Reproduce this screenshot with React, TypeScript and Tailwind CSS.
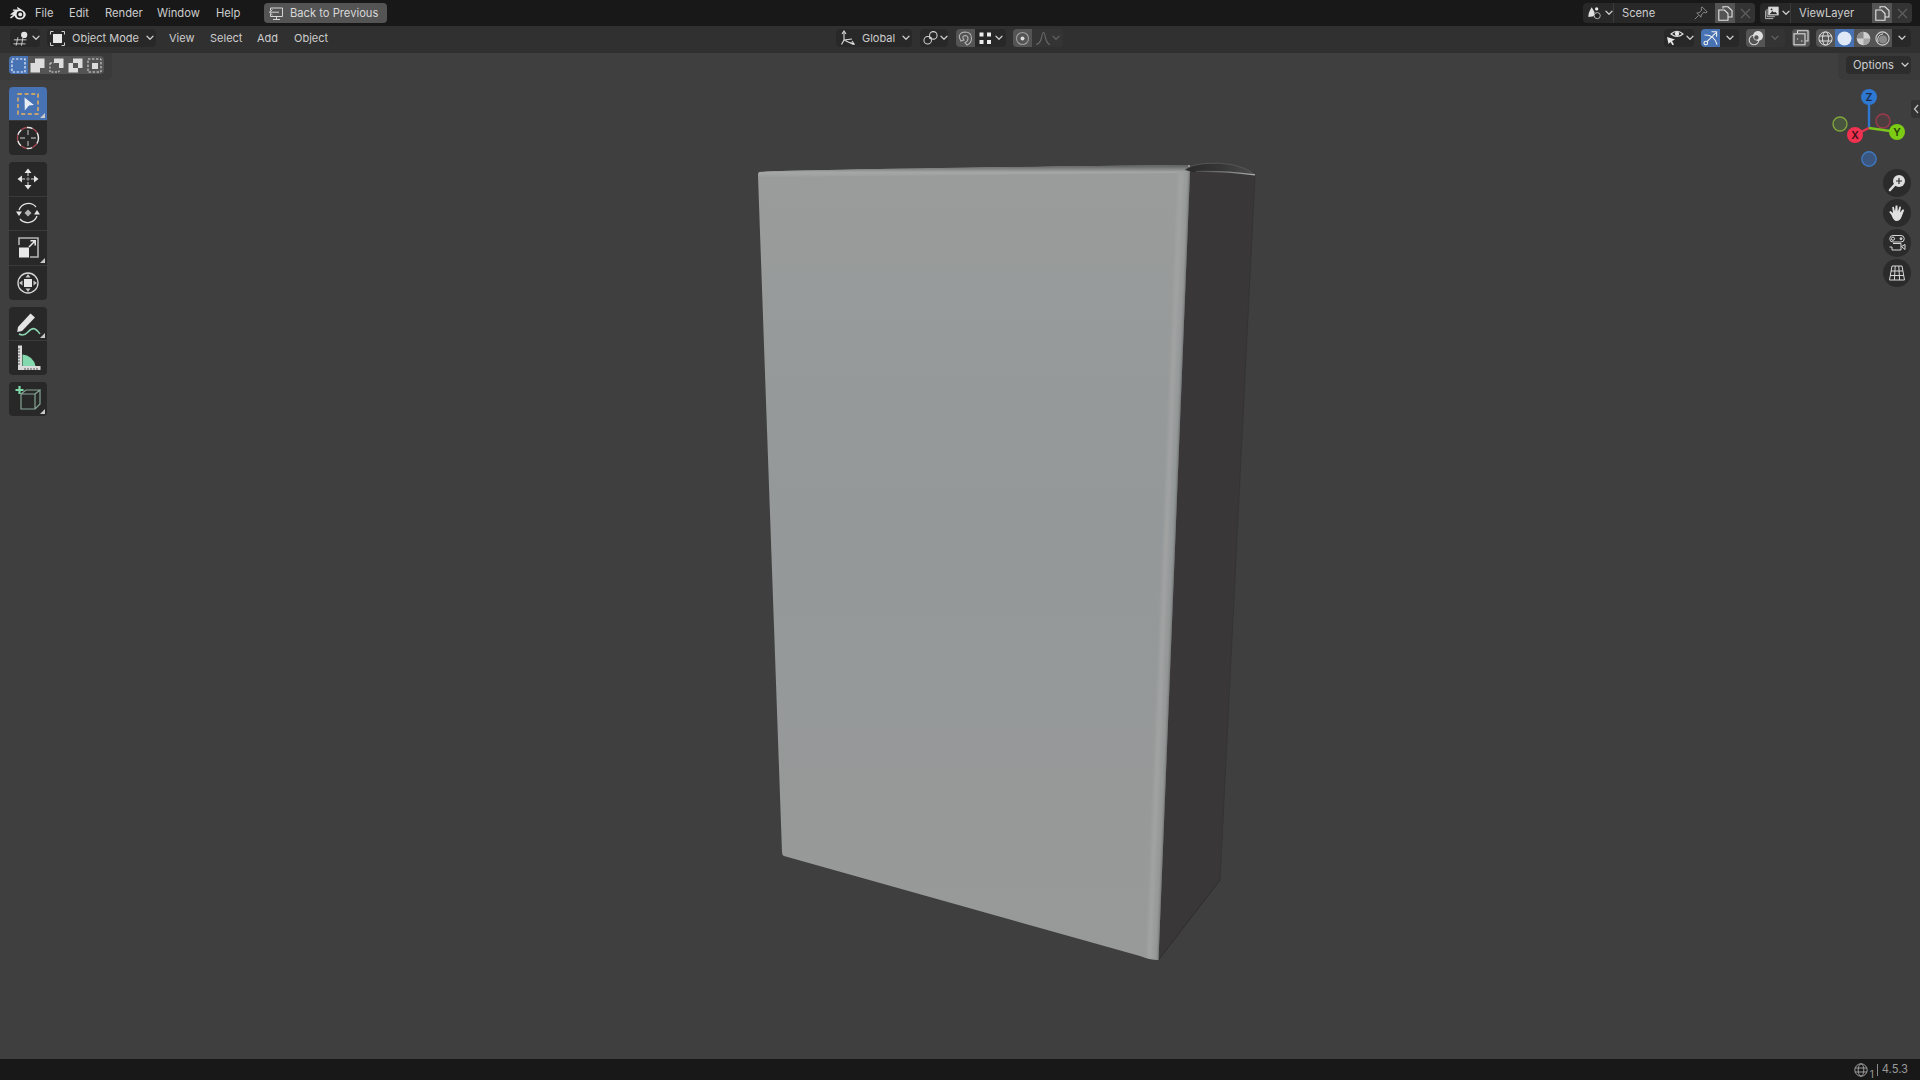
import React from "react";

const Chev = ({ c = "#c8c8c8" }: { c?: string }) => (
  <svg width="8" height="6" viewBox="0 0 8 6" className="shrink-0">
    <path d="M1 1.2 L4 4.2 L7 1.2" fill="none" stroke={c} strokeWidth="1.3" strokeLinecap="round" strokeLinejoin="round" />
  </svg>
);

const BlenderLogo = () => (
  <svg width="19" height="16" viewBox="0 0 19 16">
    <path d="M1 9.4 L5.8 5.8 L4 5.8 Q3.4 5 4.2 4.6 L9.6 4.6 L8 3.2 Q7.6 2.2 8.8 2.2 L13.2 5 Q17.6 7.4 16.6 10.8 Q15 14.4 10.8 14.4 Q6.4 14.4 5.6 10.8 L2.4 13.2 Q1 13.6 1.2 12.2 L4.4 9.8 L2 9.8 Z" fill="#e8e8e8" />
    <circle cx="11" cy="9.4" r="3.4" fill="#181818" />
    <circle cx="11.2" cy="9.4" r="1.9" fill="#e8e8e8" />
  </svg>
);

const Screen = () => (
  <svg width="16" height="16" viewBox="0 0 16 16" fill="none" stroke="#d4d4d4" strokeWidth="1">
    <path d="M2.5 3 H14.5 V11.5 H2.5 V9 M2.5 5.5 V3" />
    <path d="M8.5 11.5 V14.5 M5 14.5 H12" />
    <path d="M11 7.2 H1.5 M4.5 4.5 L1.5 7.2 L4.5 10" />
  </svg>
);

const EditorType = () => (
  <svg width="19" height="17" viewBox="0 0 19 17" fill="none" stroke="#d4d4d4" strokeWidth="1">
    <path d="M1 10 H15 M0.5 14.5 H14 M5.5 7 L3.5 16.5 M11 8 L9.5 16.5" />
    <circle cx="12.5" cy="4.5" r="3.5" fill="#e4e4e4" stroke="none" />
  </svg>
);

const ObjectIcon = () => (
  <svg width="15" height="15" viewBox="0 0 15 15" fill="none" stroke="#cfcfcf" strokeWidth="1">
    <path d="M0.5 3.5 V0.5 H3.5 M11.5 0.5 H14.5 V3.5 M14.5 11.5 V14.5 H11.5 M3.5 14.5 H0.5 V11.5" />
    <rect x="3" y="3" width="9" height="9" fill="#e8e8e8" stroke="none" />
  </svg>
);

const GlobalIcon = () => (
  <svg width="16" height="16" viewBox="0 0 16 16" fill="none" stroke="#dadada" strokeWidth="1.1">
    <path d="M4 2 V10 L1.5 14.5 M4 10 L13.5 14.5 M4 10 L12 9" />
    <path d="M2 4 L4 1 L6 4 M10.5 12.5 L14.5 14.5 L12 11" />
  </svg>
);

const LinkIcon = () => (
  <svg width="16" height="16" viewBox="0 0 16 16" fill="none" stroke="#d4d4d4" strokeWidth="1.1">
    <circle cx="5" cy="10.5" r="4" />
    <circle cx="11" cy="5.2" r="4" />
    <circle cx="8" cy="8" r="0.8" fill="#d4d4d4" />
  </svg>
);

const Magnet = () => (
  <svg width="15" height="15" viewBox="0 0 15 15" fill="none" stroke="#b4b4b4" strokeWidth="1.1">
    <path d="M3 10 L1.5 7 Q0.5 1.5 7 1 Q13.5 1 13.5 7.5 Q13.5 12 9 14 L7 11.5 Q10 10.5 10 7.5 Q10 4.5 7 4.5 Q4.5 4.8 5 7.5 L6 9 Z" />
  </svg>
);

const Dots = () => (
  <svg width="13" height="13" viewBox="0 0 13 13" fill="#ececec">
    <rect x="0.5" y="0.5" width="4" height="4" />
    <rect x="8" y="0.5" width="4" height="4" />
    <rect x="0.5" y="8" width="4" height="4" />
    <rect x="8" y="8" width="4" height="4" />
  </svg>
);

const PropCircle = () => (
  <svg width="15" height="15" viewBox="0 0 15 15" fill="none">
    <circle cx="7.5" cy="7.5" r="6" stroke="#9c9c9c" strokeWidth="1.1" />
    <circle cx="7.5" cy="7.5" r="2" fill="#dcdcdc" />
  </svg>
);

const Falloff = () => (
  <svg width="16" height="15" viewBox="0 0 16 15" fill="none">
    <path d="M1 13.5 Q5 13 6.5 7 Q7.5 1.5 8.5 1.5 Q9.5 1.5 10.5 7 Q12 13 15 13.5" stroke="#686868" strokeWidth="1.1" />
  </svg>
);

const SceneIcon = () => (
  <svg width="17" height="16" viewBox="0 0 17 16">
    <path d="M4.5 1 L8 7 L7 12 L0.5 13 Q0 8 4.5 1 Z" fill="#e0e0e0" />
    <circle cx="10.5" cy="3" r="2" fill="#e8e8e8" />
    <circle cx="11.2" cy="11.2" r="3.7" fill="#202020" stroke="#cfcfcf" strokeWidth="1" />
  </svg>
);

const PinIcon = () => (
  <svg width="14" height="14" viewBox="0 0 14 14" fill="none" stroke="#8a8a8a" strokeWidth="1">
    <path d="M8 0.8 L13.2 6 L11.8 6.8 L9.8 6.2 L7.2 9 L7 11.2 L2.8 7 L5 6.8 L7.8 4.2 L7.2 2.2 Z M4.4 9.6 L0.8 13.2" />
  </svg>
);

const Copy = () => (
  <svg width="15" height="15" viewBox="0 0 15 15" fill="none" stroke="#e4e4e4" strokeWidth="1.1">
    <path d="M5 2.5 V0.8 H10 L14 4.5 V11 H10.5 M5 4 H0.8 V14.2 H10 V7.5 L6.5 4 Z" />
  </svg>
);

const XIcon = () => (
  <svg width="11" height="11" viewBox="0 0 11 11" stroke="#5f5f5f" strokeWidth="1.2">
    <path d="M1 1 L10 10 M10 1 L1 10" />
  </svg>
);

const LayerIcon = () => (
  <svg width="17" height="16" viewBox="0 0 17 16" fill="none" stroke="#d4d4d4" strokeWidth="1">
    <path d="M2.5 3 V12.5 H12 M0.5 5 V14.8 H10" />
    <rect x="4.5" y="0.8" width="11.5" height="9.6" fill="#dcdcdc" stroke="#dcdcdc" />
    <path d="M5.5 9.5 L9 5.5 L11 7.5 L12.5 6.5 L15 9.5 Z" fill="#2a2a2a" stroke="none" />
    <circle cx="8" cy="3.6" r="1.1" fill="#2a2a2a" stroke="none" />
  </svg>
);

const VisIcon = () => (
  <svg width="18" height="16" viewBox="0 0 18 16" fill="none">
    <path d="M5 4 Q11 -1.5 17 4 Q11 9 5 4 Z" stroke="#e0e0e0" strokeWidth="1.1" />
    <circle cx="11" cy="3.8" r="2.2" fill="#e8e8e8" />
    <path d="M1 7 L9 9.5 L6 11 L8 14.5 L6.5 15.3 L4.5 12 L2.5 14 Z" fill="#e8e8e8" />
  </svg>
);

const GizmoToggle = () => (
  <svg width="16" height="16" viewBox="0 0 16 16" fill="none" stroke="#f0f0f0" strokeWidth="1.1">
    <circle cx="2.8" cy="13" r="1.8" />
    <path d="M4 11.6 L12.8 2.8 M8.5 1.8 H13.6 V6.8" />
    <path d="M1.5 5 Q11 4.5 14 14.5" />
  </svg>
);

const OverlayIcon = () => (
  <svg width="16" height="16" viewBox="0 0 16 16" fill="none">
    <circle cx="6" cy="10" r="4.8" stroke="#d4d4d4" strokeWidth="1.1" />
    <circle cx="10" cy="6" r="5" fill="#dedede" />
    <circle cx="8.4" cy="7.5" r="2.2" fill="#545454" />
  </svg>
);

const XrayIcon = () => (
  <svg width="16" height="16" viewBox="0 0 16 16" fill="none" stroke="#dcdcdc" strokeWidth="1.1">
    <path d="M4.5 3 V0.8 H15 V11 H12.5" />
    <rect x="1" y="3.8" width="11" height="11" />
    <path d="M4.5 8.5 V9.5 M8 11 H9.5" />
  </svg>
);

const Wire = () => (
  <svg width="15" height="15" viewBox="0 0 15 15" fill="none" stroke="#dcdcdc" strokeWidth="1">
    <circle cx="7.5" cy="7.5" r="6.6" />
    <ellipse cx="7.5" cy="7.5" rx="3" ry="6.6" />
    <path d="M1 5 H14 M1 10 H14" />
  </svg>
);
const Solid = () => (
  <svg width="15" height="15" viewBox="0 0 15 15">
    <circle cx="7.5" cy="7.5" r="7" fill="#dfe8f6" />
  </svg>
);
const Mat = () => (
  <svg width="15" height="15" viewBox="0 0 15 15">
    <circle cx="7.5" cy="7.5" r="6.8" fill="#cfcfcf" />
    <path d="M7.5 7.5 V0.7 A6.8 6.8 0 0 0 0.7 7.5 Z" fill="#8a8a8a" />
    <path d="M7.5 7.5 H14.3 A6.8 6.8 0 0 1 7.5 14.3 Z" fill="#a4a4a4" />
  </svg>
);
const Rendered = () => (
  <svg width="15" height="15" viewBox="0 0 15 15" fill="none">
    <circle cx="7.5" cy="7.5" r="6.6" stroke="#cfcfcf" strokeWidth="1.1" />
    <path d="M3 11 Q1.5 4 8 2.8" stroke="#d8d8d8" strokeWidth="1" />
    <circle cx="8" cy="8.4" r="4" fill="#8a8a8a" />
  </svg>
);

const Corner = () => (
  <svg width="5" height="5" viewBox="0 0 5 5" className="absolute right-[2px] bottom-[2px]">
    <path d="M5 0 V5 H0 Z" fill="#c8c8c8" />
  </svg>
);

const Svg26 = ({ children }: { children: React.ReactNode }) => (
  <svg width="26" height="26" viewBox="0 0 26 26" fill="none">{children}</svg>
);

const SelectIcon = () => (
  <Svg26>
    <rect x="3" y="3" width="20" height="20" stroke="#f1b35a" strokeWidth="1.4" strokeDasharray="4 2.6" />
    <path d="M9.5 6.5 L19 14 L14 14.6 L9.8 19.5 Z" fill="#e6ecf4" />
  </Svg26>
);
const CursorIcon = () => (
  <Svg26>
    <circle cx="13" cy="13" r="10.5" stroke="#e8e8e8" strokeWidth="1.4" strokeDasharray="6 6" />
    <circle cx="13" cy="13" r="10.5" stroke="#a34a55" strokeWidth="1.4" strokeDasharray="6 6" strokeDashoffset="6" />
    <path d="M13 5 V10 M13 16 V21 M5 13 H10 M16 13 H21" stroke="#9a9a9a" strokeWidth="1.4" />
  </Svg26>
);
const MoveIcon = () => (
  <Svg26>
    <path d="M13 2.5 L16.5 7 H9.5 Z M13 23.5 L9.5 19 H16.5 Z M2.5 13 L7 9.5 V16.5 Z M23.5 13 L19 16.5 V9.5 Z" fill="#e6e6e6" />
    <path d="M13 7 V10 M13 16 V19 M7 13 H10 M16 13 H19" stroke="#9a9a9a" strokeWidth="1.6" />
    <path d="M13 11 L15 13 L13 15 L11 13 Z" fill="#7d7d7d" />
  </Svg26>
);
const RotateIcon = () => (
  <Svg26>
    <path d="M4 10 A10 10 0 0 1 21 7 M22 16 A10 10 0 0 1 5 19" stroke="#e2e2e2" strokeWidth="1.3" />
    <path d="M1 11.5 H7 L4 16 Z M25 14.5 H19 L22 10 Z" fill="#e6e6e6" />
    <path d="M13 9.5 L16.5 13 L13 16.5 L9.5 13 Z" fill="#b4b4b4" />
  </Svg26>
);
const ScaleIcon = () => (
  <Svg26>
    <path d="M4 10 V3 H23 V22 H15" stroke="#b4b4b4" strokeWidth="1.6" />
    <rect x="4" y="12.5" width="10" height="10" fill="#e8e8e8" />
    <path d="M14 12 L20 6 M15.5 5.8 H20.2 V10.5" stroke="#e8e8e8" strokeWidth="1.5" />
  </Svg26>
);
const TransformIcon = () => (
  <Svg26>
    <circle cx="13" cy="13" r="10" stroke="#d8d8d8" strokeWidth="1.3" />
    <rect x="9" y="9" width="8" height="8" fill="#e8e8e8" />
    <path d="M13 4 L15.5 7.5 H10.5 Z M13 22 L10.5 18.5 H15.5 Z M4 13 L7.5 10.5 V15.5 Z M22 13 L18.5 15.5 V10.5 Z" fill="#c4c4c4" />
  </Svg26>
);
const AnnotateIcon = () => (
  <Svg26>
    <path d="M3 16 L15.5 2.5 L20 6.5 L7 20 L2.2 21 Z" fill="#e4e4e4" />
    <path d="M4 23 Q9 25.5 13 21 Q17 16.5 20 18 Q23 19.5 25 23" stroke="#8fd8b4" strokeWidth="1.5" />
  </Svg26>
);
const MeasureIcon = () => (
  <Svg26>
    <path d="M7.5 9.5 A 14 14 0 0 1 20.5 21 H7.5 Z" fill="#83d9ad" />
    <path d="M3 0.5 H7 V21 H25.5 V25 H3 Z" fill="#dadada" />
    <path d="M3 4 H5 M3 7 H5 M3 10 H5 M3 13 H5 M3 16 H5 M3 19 H5 M10 25 V23 M13 25 V23 M16 25 V23 M19 25 V23 M22 25 V23" stroke="#555" strokeWidth="1" />
  </Svg26>
);
const AddIcon = () => (
  <Svg26>
    <path d="M6 8 H20 V23 H6 Z M6 8 L11 4 H25 L20 8 M25 4 V18 L20 23" stroke="#86a695" strokeWidth="1.2" />
    <path d="M4.5 0 V8 M0.5 4 H8.5" stroke="#7ed8a8" strokeWidth="2.2" />
  </Svg26>
);

const Magnify = () => (
  <svg width="18" height="18" viewBox="0 0 18 18">
    <circle cx="11" cy="7" r="6" fill="#dedede" />
    <path d="M11 4 V10 M8 7 H14" stroke="#2c2c2c" strokeWidth="1.2" />
    <path d="M6.5 11 L2 16" stroke="#dedede" strokeWidth="2.6" strokeLinecap="round" />
  </svg>
);
const Hand = () => (
  <svg width="18" height="18" viewBox="0 0 18 18">
    <path d="M3.5 11 L1.2 8 L2.4 7 L5 9 L4.2 3 L5.8 2.8 L7 7.5 L7.6 1.6 H9.4 L9.8 7.5 L11.5 2.4 L13 2.8 L12 8.5 L14.8 5.2 L16.2 6 L13.5 13 Q12 17 8.5 17 Q5.5 17 3.5 11 Z" fill="#e0e0e0" />
  </svg>
);
const Camera = () => (
  <svg width="18" height="18" viewBox="0 0 18 18" fill="none" stroke="#d8d8d8" strokeWidth="1">
    <path d="M5 1.5 H13 A3.2 3.2 0 0 1 13 8 H5 A3.2 3.2 0 0 1 5 1.5 Z" />
    <circle cx="5" cy="4.7" r="1.6" />
    <circle cx="13" cy="4.7" r="1" fill="#d8d8d8" />
    <path d="M5 9.5 H13 V16 H4 V13 H1.5 M13.5 12.5 L17 10.5 V15.5 Z" />
  </svg>
);
const GridIcon = () => (
  <svg width="18" height="18" viewBox="0 0 18 18" fill="none" stroke="#d8d8d8" strokeWidth="1">
    <path d="M4 2 H14 L16.5 16 H1.5 Z M7.2 2 L6.4 16 M10.8 2 L11.6 16 M3 7 H15 M2.2 11.5 H15.8" />
  </svg>
);

const Globe = () => (
  <svg width="14" height="14" viewBox="0 0 14 14" fill="none" stroke="#a8a8a8" strokeWidth="0.9">
    <circle cx="7" cy="7" r="6.2" />
    <ellipse cx="7" cy="7" rx="2.8" ry="6.2" />
    <path d="M1 5 H13 M1 9 H13" />
  </svg>
);

const MenuItem = ({ children, w }: { children: React.ReactNode; w: string }) => (
  <span className={w}>{children}</span>
);

const ToolBtn = ({ children, active, corner, top, bottom, tall }: { children: React.ReactNode; active?: boolean; corner?: boolean; top?: boolean; bottom?: boolean; tall?: boolean }) => (
  <div
    className={
      "relative flex w-[38px] items-center justify-center " +
      (tall ? "h-[34.5px] " : "h-[34px] ") +
      (active ? "bg-[#4772b3] " : "bg-[#282828] ") +
      (top ? "rounded-t-[4px] " : "") +
      (bottom ? "rounded-b-[4px] " : "border-b border-[#3a3a3a] ")
    }
  >
    {children}
    {corner && <Corner />}
  </div>
);

const NavBtn = ({ children }: { children: React.ReactNode }) => (
  <div className="flex h-[28px] w-[28px] items-center justify-center rounded-full bg-[#2b2b2b]">{children}</div>
);

const Box = () => (
  <svg className="absolute left-0 top-0" width="1920" height="1006" viewBox="0 53 1920 1006">
    <defs>
      <linearGradient id="front" x1="0" y1="0" x2="0" y2="1">
        <stop offset="0" stopColor="#999c9b" />
        <stop offset="0.45" stopColor="#949898" />
        <stop offset="1" stopColor="#989a99" />
      </linearGradient>
      <linearGradient id="topStrip" x1="0" y1="0" x2="0" y2="1">
        <stop offset="0" stopColor="#5a5c5c" />
        <stop offset="0.6" stopColor="#a5a7a7" />
        <stop offset="1" stopColor="#9d9f9f" />
      </linearGradient>
      <linearGradient id="capFill" x1="0" y1="0" x2="1" y2="0">
        <stop offset="0" stopColor="#2b2a2a" />
        <stop offset="0.5" stopColor="#373636" />
        <stop offset="1" stopColor="#4c4c4c" />
      </linearGradient>
      <linearGradient id="capLine" x1="0" y1="0" x2="1" y2="0">
        <stop offset="0" stopColor="#4a4a4a" />
        <stop offset="1" stopColor="#aeb0b0" />
      </linearGradient>
      <filter id="soft" x="-50%" y="-5%" width="200%" height="110%">
        <feGaussianBlur stdDeviation="1.8" />
      </filter>
      <clipPath id="frontClip">
        <path d="M760 172 Q800 169.5 1190 165 L1190 172 L1158.5 960 Q1150 960 1140 956 L784 856 Q782 855 782 852 L758 176 Q758 172 760 172 Z" />
      </clipPath>
    </defs>
    <path d="M1255 175 L1220 880 L1158.5 960 L1187 170 L1255 172 Z" fill="#393737" />
    <path d="M1158.5 960 L1220 880" stroke="#2e2d2d" strokeWidth="1" />
    <path d="M1220 880 L1255 175" stroke="#353434" strokeWidth="1" />
    <path d="M760 172 Q800 169.5 1190 165 L1190 172 L1158.5 960 Q1150 960 1140 956 L784 856 Q782 855 782 852 L758 176 Q758 172 760 172 Z" fill="url(#front)" />
    <g clipPath="url(#frontClip)">
      <path d="M1181 172 L1149.5 960" stroke="#a1a3a3" strokeWidth="5" filter="url(#soft)" />
      <path d="M1191 170 L1159.5 960" stroke="#5c5d5d" strokeWidth="2.6" filter="url(#soft)" />
    </g>
    <path d="M760 172 Q800 169.5 1188 165 L1188 171 L1176 173 L762 177 L758 176 Q758 172 760 172 Z" fill="url(#topStrip)" />
    <path d="M1185 170 Q1190 165 1205 163.5 Q1238 161 1255 174.5 Q1225 171 1193 172 Z" fill="url(#capFill)" />
    <path d="M1185 170 Q1190 165 1205 163.5 Q1238 161 1255 174.5" stroke="#5a5a5a" strokeWidth="0.8" fill="none" />
    <path d="M1196 171.5 Q1225 171 1255 174.8" stroke="url(#capLine)" strokeWidth="1.2" fill="none" />
  </svg>
);

const Gizmo = () => (
  <svg width="80" height="82" viewBox="0 0 80 82" className="block">
    <circle cx="37" cy="73" r="7.2" fill="#3b567f" stroke="#3f78c0" strokeWidth="1.4" />
    <circle cx="8" cy="38" r="7" fill="#4a5540" stroke="#7fa53a" strokeWidth="1.4" />
    <circle cx="51" cy="35" r="7" fill="#4f3e40" stroke="#9d3a4c" strokeWidth="1.4" />
    <path d="M37 42 V14" stroke="#2e78d2" strokeWidth="2.4" />
    <path d="M37 42 L23 49" stroke="#e0344f" strokeWidth="2.4" />
    <path d="M37 42 L65 46" stroke="#7bc51e" strokeWidth="2.4" />
    <circle cx="37" cy="11" r="8" fill="#2e78d2" />
    <circle cx="23" cy="49" r="8" fill="#f0314f" />
    <circle cx="65" cy="46" r="8" fill="#7ccb14" />
    <text x="37" y="15" textAnchor="middle" className="fill-[#1b2b44] font-['Inter'] text-[10.5px] font-semibold">Z</text>
    <text x="23" y="53" textAnchor="middle" className="fill-[#3d0e16] font-['Inter'] text-[10.5px] font-semibold">X</text>
    <text x="65" y="50" textAnchor="middle" className="fill-[#26400a] font-['Inter'] text-[10.5px] font-semibold">Y</text>
  </svg>
);

export default function App() {
  return (
    <div className="flex h-screen w-full flex-col overflow-hidden bg-[#3f3f3f] font-['Inter',sans-serif] text-[11.2px] text-[#cdcdcd]">
      <div className="flex h-[26px] shrink-0 items-center bg-[#181818] pr-[8px]">
        <div className="ml-[9px] flex w-[26px] shrink-0 items-center"><BlenderLogo /></div>
        <MenuItem w="w-[34px] pt-[1px]">File</MenuItem>
        <MenuItem w="w-[36px] pt-[1px]">Edit</MenuItem>
        <MenuItem w="w-[52px] pt-[1px]">Render</MenuItem>
        <MenuItem w="w-[59px] pt-[1px]">Window</MenuItem>
        <MenuItem w="w-[48px] pt-[1px]">Help</MenuItem>
        <div className="flex h-[20px] w-[123px] items-center gap-[6px] rounded-[4px] bg-[#545454] pl-[4px] text-[#d8d8d8]">
          <Screen />
          <span className="pt-[1px]">Back to Previous</span>
        </div>
        <div className="ml-auto flex h-[20px] w-[172px] items-center overflow-hidden rounded-[4px] bg-[#282828]">
          <div className="flex h-full w-[31px] items-center gap-[3px] border-r border-[#3a3a3a] pl-[5px]"><SceneIcon /><Chev /></div>
          <div className="flex h-full w-[101px] items-center justify-between pl-[8px] pr-[7px]"><span className="pt-[1px]">Scene</span><PinIcon /></div>
          <div className="flex h-full w-[20px] items-center justify-center bg-[#545454]"><Copy /></div>
          <div className="flex h-full w-[20px] items-center justify-center bg-[#333333]"><XIcon /></div>
        </div>
        <div className="ml-[5px] flex h-[20px] w-[152px] items-center overflow-hidden rounded-[4px] bg-[#282828]">
          <div className="flex h-full w-[31px] items-center gap-[3px] border-r border-[#3a3a3a] pl-[5px]"><LayerIcon /><Chev /></div>
          <div className="flex h-full w-[81px] items-center pl-[8px]"><span className="pt-[1px]">ViewLayer</span></div>
          <div className="flex h-full w-[20px] items-center justify-center bg-[#545454]"><Copy /></div>
          <div className="flex h-full w-[20px] items-center justify-center bg-[#333333]"><XIcon /></div>
        </div>
      </div>

      <div className="flex h-[27px] shrink-0 items-center bg-[#303030] pb-[3px] pl-[10px] pr-[9px] text-[11px]">
        <div className="flex h-[18px] w-[30px] items-center gap-[2px] rounded-[4px] bg-[#282828] pl-[3px]"><EditorType /><Chev /></div>
        <div className="ml-[7px] flex h-[18px] w-[109px] items-center rounded-[4px] bg-[#282828] pl-[3px] pr-[2px]">
          <ObjectIcon />
          <span className="ml-[7px]">Object Mode</span>
          <span className="ml-auto"><Chev /></span>
        </div>
        <MenuItem w="ml-[13px] w-[41px]">View</MenuItem>
        <MenuItem w="w-[47px]">Select</MenuItem>
        <MenuItem w="w-[37px]">Add</MenuItem>
        <MenuItem w="w-[60px]">Object</MenuItem>

        <div className="ml-[482px] flex h-[18px] w-[76px] items-center rounded-[4px] bg-[#282828] pl-[4px] pr-[2px]">
          <GlobalIcon />
          <span className="ml-[6px]">Global</span>
          <span className="ml-auto"><Chev /></span>
        </div>
        <div className="ml-[8px] flex h-[18px] w-[28px] items-center gap-[2px] rounded-[4px] bg-[#282828] pl-[3px]"><LinkIcon /><Chev /></div>
        <div className="ml-[8px] flex h-[18px] w-[50px] items-center overflow-hidden rounded-[4px] bg-[#282828]">
          <div className="flex h-full w-[19px] items-center justify-center bg-[#545454]"><Magnet /></div>
          <div className="flex flex-1 items-center justify-between pl-[4px] pr-[3px]"><Dots /><Chev /></div>
        </div>
        <div className="ml-[7px] flex h-[18px] w-[50px] items-center overflow-hidden rounded-[4px] bg-[#343434]">
          <div className="flex h-full w-[19px] items-center justify-center bg-[#545454]"><PropCircle /></div>
          <div className="flex flex-1 items-center justify-between pl-[3px] pr-[3px]"><Falloff /><Chev c="#5f5f5f" /></div>
        </div>

        <div className="ml-auto flex h-[18px] w-[30px] items-center gap-[2px] rounded-[4px] bg-[#282828] pl-[2px]"><VisIcon /><Chev /></div>
        <div className="ml-[7px] flex h-[18px] w-[38px] items-center overflow-hidden rounded-[4px] bg-[#282828]">
          <div className="flex h-full w-[19px] items-center justify-center bg-[#4772b3]"><GizmoToggle /></div>
          <div className="flex flex-1 items-center justify-center"><Chev /></div>
        </div>
        <div className="ml-[7px] flex h-[18px] w-[39px] items-center overflow-hidden rounded-[4px] bg-[#343434]">
          <div className="flex h-full w-[19px] items-center justify-center bg-[#545454]"><OverlayIcon /></div>
          <div className="flex flex-1 items-center justify-center"><Chev c="#5f5f5f" /></div>
        </div>
        <div className="ml-[7px] flex h-[18px] w-[18px] items-center justify-center rounded-[4px] bg-[#545454]"><XrayIcon /></div>
        <div className="ml-[6px] flex h-[18px] w-[95px] items-center overflow-hidden rounded-[4px] bg-[#282828]">
          <div className="flex h-full w-[19px] items-center justify-center bg-[#545454]"><Wire /></div>
          <div className="flex h-full w-[19px] items-center justify-center bg-[#4772b3]"><Solid /></div>
          <div className="flex h-full w-[19px] items-center justify-center bg-[#545454]"><Mat /></div>
          <div className="flex h-full w-[19px] items-center justify-center bg-[#545454]"><Rendered /></div>
          <div className="flex flex-1 items-center justify-center"><Chev /></div>
        </div>
      </div>

      <div className="relative flex min-h-0 flex-1 justify-between">
        <Box />

        <div className="relative flex flex-col">
          <div className="flex h-[27px] w-[112px] items-start rounded-br-[6px] bg-[#3a3a3a] pl-[9px] pt-[3px]">
            <div className="flex h-[18px] items-center overflow-hidden rounded-[4px] bg-[#545454]">
              <div className="flex h-full w-[19px] items-center justify-center bg-[#4772b3]">
                <svg width="15" height="15" viewBox="0 0 15 15" fill="none"><rect x="1" y="1" width="13" height="13" stroke="#f0f4fa" strokeWidth="1.2" strokeDasharray="2.4 1.6" /></svg>
              </div>
              <div className="flex h-full w-[19px] items-center justify-center">
                <svg width="15" height="15" viewBox="0 0 15 15" fill="#dcdcdc"><path d="M0.5 5 H5 V0.5 H14.5 V10 H10 V14.5 H0.5 Z" /></svg>
              </div>
              <div className="flex h-full w-[19px] items-center justify-center">
                <svg width="15" height="15" viewBox="0 0 15 15" fill="none"><path d="M5 0.5 H14.5 V10 H10 V5 H5 Z" fill="#dcdcdc" /><path d="M1 5 H5 M1 5 V14 H10 V11" stroke="#dcdcdc" strokeWidth="1" strokeDasharray="2 1.5" /></svg>
              </div>
              <div className="flex h-full w-[19px] items-center justify-center">
                <svg width="15" height="15" viewBox="0 0 15 15" fill="#dcdcdc"><path d="M5 0.5 H14.5 V10 H10 V5 H5 Z M0.5 5 H5 V10 H10 V14.5 H0.5 Z" /></svg>
              </div>
              <div className="flex h-full w-[19px] items-center justify-center">
                <svg width="15" height="15" viewBox="0 0 15 15" fill="none"><rect x="1" y="1" width="13" height="13" stroke="#dcdcdc" strokeWidth="1" strokeDasharray="2.4 1.6" /><rect x="5" y="5" width="6" height="6" fill="#dcdcdc" /></svg>
              </div>
            </div>
          </div>

          <div className="ml-[9px] mt-[7px] flex flex-col">
            <ToolBtn active top corner><SelectIcon /></ToolBtn>
            <ToolBtn bottom><CursorIcon /></ToolBtn>
            <div className="h-[7px]" />
            <ToolBtn tall top><MoveIcon /></ToolBtn>
            <ToolBtn tall><RotateIcon /></ToolBtn>
            <ToolBtn tall corner><ScaleIcon /></ToolBtn>
            <ToolBtn tall bottom><TransformIcon /></ToolBtn>
            <div className="h-[7px]" />
            <ToolBtn top corner><AnnotateIcon /></ToolBtn>
            <ToolBtn bottom><MeasureIcon /></ToolBtn>
            <div className="h-[7px]" />
            <ToolBtn top bottom corner><AddIcon /></ToolBtn>
          </div>
        </div>

        <div className="relative flex w-[88px] flex-col items-end">
          <div className="flex h-[27px] w-[82px] items-start rounded-bl-[6px] bg-[#3a3a3a] pr-[9px] pt-[3px]">
            <div className="ml-auto flex h-[18px] w-[65px] items-center justify-between rounded-[4px] bg-[#2d2d2d] pl-[7px] pr-[2px]">
              <span className="pt-[1px]">Options</span>
              <Chev />
            </div>
          </div>
          <div className="relative mt-[6px] flex w-full">
            <Gizmo />
            <div className="absolute right-0 top-[14px] flex h-[18px] w-[9px] items-center justify-center rounded-l-[3px] bg-[#333333]">
              <svg width="6" height="10" viewBox="0 0 6 10" fill="none"><path d="M5 1 L1.5 5 L5 9" stroke="#c8c8c8" strokeWidth="1.2" /></svg>
            </div>
          </div>
          <div className="mr-[9px] mt-[1px] flex flex-col gap-[2px]">
            <NavBtn><Magnify /></NavBtn>
            <NavBtn><Hand /></NavBtn>
            <NavBtn><Camera /></NavBtn>
            <NavBtn><GridIcon /></NavBtn>
          </div>
        </div>
      </div>

      <div className="flex h-[21px] shrink-0 items-center justify-end gap-[3px] bg-[#181818] pr-[12px] text-[#9a9a9a]">
        <div className="relative h-[14px] w-[20px]">
          <Globe />
          <span className="absolute right-0 -bottom-[2px] text-[10px] leading-none">1</span>
        </div>
        <span className="h-[12px] w-px bg-[#8a8a8a]" />
        <span className="ml-[1px]">4.5.3</span>
      </div>
    </div>
  );
}
